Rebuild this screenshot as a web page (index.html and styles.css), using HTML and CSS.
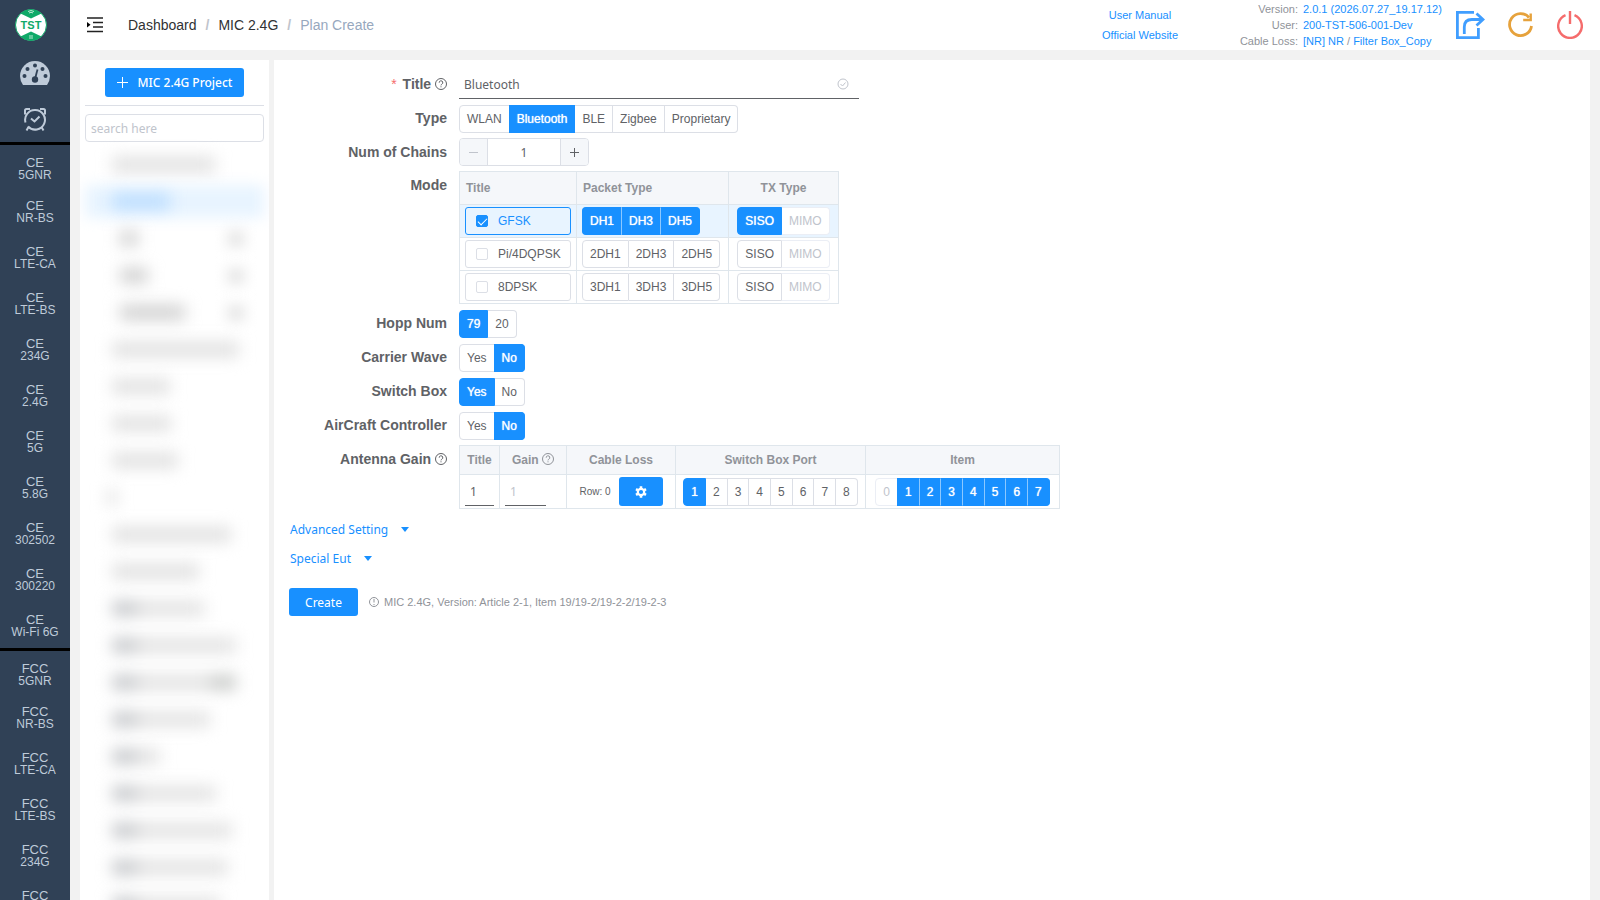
FILE: index.html
```html
<!DOCTYPE html>
<html lang="en">
<head>
<meta charset="utf-8">
<title>Plan Create</title>
<link rel="stylesheet" href="styles.css">
</head>
<body>
<svg width="0" height="0" class="defs" aria-hidden="true">
  <symbol id="help" viewBox="1 1 12 12"><circle cx="7" cy="7" r="5.500" fill="none" stroke="currentColor"/><path d="M5.200 5.700a1.800 1.800 0 1 1 2.600 1.500q-.8.4-.8 1.200M7 9.300v1" fill="none" stroke="currentColor"/></symbol>
</svg>
<div class="app">
  <nav class="rail">
    <a href="#" class="logo" aria-label="Home">
      <svg width="32" height="32" viewBox="0 0 32 32"><circle cx="16" cy="16" r="15.5" fill="#fff" stroke="#0fa968"/><path d="M5.500 4.500A15.500 15.500 0 0 1 26.500 4.500L16 9.500zM5.500 27.500A15.500 15.500 0 0 0 26.500 27.500L16 22.500z" fill="#0fa968"/><path d="M13 2.500q3-2 6 0M14 4q2-1.500 4 0M14 27h4M14 29h4" stroke="#bde8d3" fill="none"/><text x="16" y="20" text-anchor="middle" class="logo-text">TST</text></svg>
    </a>
    <a href="#" class="rail-icon" aria-label="Dashboard">
      <svg width="32" height="26" viewBox="0 0 32 26"><path d="M4 25Q1 20.500 1 16a15 15 0 0 1 30 0q0 4.500-3 9z" fill="#bfcbd9"/><g fill="#304156"><circle cx="5.500" cy="16" r="2"/><circle cx="8.500" cy="9" r="2"/><circle cx="16" cy="5.500" r="2"/><circle cx="23.500" cy="9" r="2"/><circle cx="26.500" cy="16" r="2"/><circle cx="16" cy="19.500" r="3.200"/></g><path d="M16 19l2.500-9.500" stroke="#304156" stroke-width="1.800"/></svg>
    </a>
    <a href="#" class="rail-icon" aria-label="Tasks">
      <svg width="24" height="25" viewBox="0 0 24 25" fill="none" stroke="#bfcbd9" stroke-width="2"><path d="M2.500 15.500A9.800 9.800 0 0 1 12 3a9.800 9.800 0 1 1-7 16.500"/><path d="M8 11.500l3.500 3 5-5"/><path d="M2 7.500V3.500q0-1.500 1.500-1.500h3.500M22 7.500V3.500q0-1.500-1.500-1.500h-3.500M5.500 20l-2 3.500M18.500 20l2 3.500"/></svg>
    </a>
    <div class="group">
      <a href="#">CE<small>5GNR</small></a><a href="#">CE<small>NR-BS</small></a><a href="#">CE<small>LTE-CA</small></a><a href="#">CE<small>LTE-BS</small></a><a href="#">CE<small>234G</small></a><a href="#">CE<small>2.4G</small></a><a href="#">CE<small>5G</small></a><a href="#">CE<small>5.8G</small></a><a href="#">CE<small>302502</small></a><a href="#">CE<small>300220</small></a><a href="#">CE<small>Wi-Fi 6G</small></a>
    </div>
    <div class="group">
      <a href="#">FCC<small>5GNR</small></a><a href="#">FCC<small>NR-BS</small></a><a href="#">FCC<small>LTE-CA</small></a><a href="#">FCC<small>LTE-BS</small></a><a href="#">FCC<small>234G</small></a><a href="#">FCC</a>
    </div>
  </nav>

  <div class="page">
    <header class="topbar">
      <button class="plain" aria-label="Toggle sidebar">
        <svg width="16" height="16" viewBox="0 0 16 16"><path d="M0 1h16M6 5.500h10M6 10h10M0 14.500h16" stroke="#222" stroke-width="1.500"/><path d="M0 5v5.500l3.500-2.800z" fill="#000"/></svg>
      </button>
      <nav class="crumbs" aria-label="Breadcrumb"><a href="#">Dashboard</a><b>/</b><a href="#">MIC 2.4G</a><b>/</b><span>Plan Create</span></nav>
      <div class="links"><a href="#">User Manual</a><a href="#">Official Website</a></div>
      <dl class="info">
        <dt>Version:</dt><dd><a href="#">2.0.1 (2026.07.27_19.17.12)</a></dd>
        <dt>User:</dt><dd><a href="#">200-TST-506-001-Dev</a></dd>
        <dt>Cable Loss:</dt><dd><a href="#">[NR] NR</a> / <a href="#">Filter Box_Copy</a></dd>
      </dl>
      <div class="actions">
        <button class="plain" aria-label="Share"><svg width="30" height="30" viewBox="0 0 30 30" fill="none" stroke="#409eff" stroke-width="2.800"><path d="M19 2.400H2.400v25.200H23.400V18"/><path d="M9.300 24v-7q0-7.500 7.500-7.500H27M21.500 3.500l6.500 6-6.500 6"/></svg></button>
        <button class="plain" aria-label="Refresh"><svg width="26" height="26" viewBox="0 0 26 26" fill="none" stroke="#e6a23c" stroke-width="2.800"><path d="M21 5.500A11 11 0 1 0 23.500 14"/><path d="M22.700 1.500v6.500h-7.500" stroke-width="2.400"/></svg></button>
        <button class="plain" aria-label="Log out"><svg width="26" height="28" viewBox="0 0 26 28" fill="none" stroke="#f56c6c" stroke-width="2.400"><path d="M8.500 4.200a11.800 11.800 0 1 0 9 0M13 0v13"/></svg></button>
      </div>
    </header>

    <main class="content">
      <aside class="panel projects">
        <button class="primary add"><svg width="11" height="11" viewBox="0 0 11 11"><path d="M5.500 0v11M0 5.500h11" stroke="#fff"/></svg>MIC 2.4G Project</button>
        <input class="search" type="text" placeholder="search here" aria-label="Search projects">
        <div class="tree" aria-hidden="true">
          <div class="node"><i style="width:103px"></i></div>
          <div class="node active"><i style="width:58px"></i></div>
          <div class="node child"><i style="width:18px"></i><u></u></div>
          <div class="node child"><i style="width:28px"></i><u></u></div>
          <div class="node child"><i style="width:65px"></i><u></u></div>
          <div class="node"><i style="width:127px"></i></div>
          <div class="node"><i style="width:58px"></i></div>
          <div class="node"><i style="width:59px"></i></div>
          <div class="node"><i style="width:66px"></i></div>
          <div class="node faint"><i style="width:10px"></i></div>
          <div class="node"><i style="width:119px"></i></div>
          <div class="node"><i style="width:87px"></i></div>
          <div class="node marked"><i style="width:92px"></i></div>
          <div class="node marked"><i style="width:124px"></i></div>
          <div class="node marked tail"><i style="width:124px"></i></div>
          <div class="node marked"><i style="width:98px"></i></div>
          <div class="node marked"><i style="width:48px"></i></div>
          <div class="node marked"><i style="width:104px"></i></div>
          <div class="node marked"><i style="width:120px"></i></div>
          <div class="node marked"><i style="width:116px"></i></div>
          <div class="node marked"><i style="width:108px"></i></div>
        </div>
      </aside>

      <form class="panel plan">
        <div class="row">
          <label class="name" for="title"><em>*</em> Title <svg class="q"><use href="#help"/></svg></label>
          <div class="line title"><input id="title" type="text" value="Bluetooth"><svg width="12" height="12" viewBox="0 0 12 12" fill="none" stroke="#c0c4cc"><circle cx="6" cy="6" r="5"/><path d="M3.500 6l2 2 3-3.500"/></svg></div>
        </div>
        <div class="row">
          <span class="name" id="l-type">Type</span>
          <div class="seg" role="group" aria-labelledby="l-type"><label><input type="radio" name="type">WLAN</label><label><input type="radio" name="type" checked>Bluetooth</label><label><input type="radio" name="type">BLE</label><label><input type="radio" name="type">Zigbee</label><label><input type="radio" name="type">Proprietary</label></div>
        </div>
        <div class="row">
          <label class="name" for="chains">Num of Chains</label>
          <div class="stepper"><button type="button" disabled aria-label="Decrease"><svg width="9" height="9"><path d="M0 4.500h9" stroke="currentColor"/></svg></button><input id="chains" type="text" value="1"><button type="button" aria-label="Increase"><svg width="9" height="9"><path d="M0 4.500h9M4.500 0v9" stroke="currentColor"/></svg></button></div>
        </div>
        <div class="row">
          <span class="name">Mode</span>
          <table class="grid mode">
            <thead><tr><th>Title</th><th>Packet Type</th><th class="mid">TX Type</th></tr></thead>
            <tbody>
              <tr class="on"><td><label class="check"><input type="checkbox" checked>GFSK</label></td>
                <td><div class="seg"><label><input type="checkbox" checked>DH1</label><label><input type="checkbox" checked>DH3</label><label><input type="checkbox" checked>DH5</label></div></td>
                <td class="mid"><div class="seg"><label><input type="radio" name="tx1" checked>SISO</label><label><input type="radio" name="tx1" disabled>MIMO</label></div></td></tr>
              <tr><td><label class="check"><input type="checkbox">Pi/4DQPSK</label></td>
                <td><div class="seg"><label><input type="checkbox">2DH1</label><label><input type="checkbox">2DH3</label><label><input type="checkbox">2DH5</label></div></td>
                <td class="mid"><div class="seg"><label><input type="radio" name="tx2">SISO</label><label><input type="radio" name="tx2" disabled>MIMO</label></div></td></tr>
              <tr><td><label class="check"><input type="checkbox">8DPSK</label></td>
                <td><div class="seg"><label><input type="checkbox">3DH1</label><label><input type="checkbox">3DH3</label><label><input type="checkbox">3DH5</label></div></td>
                <td class="mid"><div class="seg"><label><input type="radio" name="tx3">SISO</label><label><input type="radio" name="tx3" disabled>MIMO</label></div></td></tr>
            </tbody>
          </table>
        </div>
        <div class="row">
          <span class="name" id="l-hopp">Hopp Num</span>
          <div class="seg" role="group" aria-labelledby="l-hopp"><label><input type="radio" name="hopp" checked>79</label><label><input type="radio" name="hopp">20</label></div>
        </div>
        <div class="row">
          <span class="name" id="l-cw">Carrier Wave</span>
          <div class="seg" role="group" aria-labelledby="l-cw"><label><input type="radio" name="cw">Yes</label><label><input type="radio" name="cw" checked>No</label></div>
        </div>
        <div class="row">
          <span class="name" id="l-sb">Switch Box</span>
          <div class="seg" role="group" aria-labelledby="l-sb"><label><input type="radio" name="sb" checked>Yes</label><label><input type="radio" name="sb">No</label></div>
        </div>
        <div class="row">
          <span class="name" id="l-ac">AirCraft Controller</span>
          <div class="seg" role="group" aria-labelledby="l-ac"><label><input type="radio" name="ac">Yes</label><label><input type="radio" name="ac" checked>No</label></div>
        </div>
        <div class="row">
          <span class="name">Antenna Gain <svg class="q"><use href="#help"/></svg></span>
          <table class="grid gain">
            <thead><tr><th>Title</th><th>Gain <svg class="q"><use href="#help"/></svg></th><th>Cable Loss</th><th>Switch Box Port</th><th>Item</th></tr></thead>
            <tbody><tr>
              <td><div class="line"><input type="text" value="1" aria-label="Antenna title"></div></td>
              <td><div class="line short"><input type="text" placeholder="1" aria-label="Antenna gain"></div></td>
              <td><div class="loss">Row: 0<button type="button" class="primary" aria-label="Cable loss settings"><svg width="12" height="12" viewBox="0 0 12 12"><circle cx="6" cy="6" r="3.200" fill="none" stroke="#fff" stroke-width="2.200"/><path d="M6 .2v2M6 9.800v2M1 3.100l1.700 1M9.300 7.900l1.700 1M1 8.900l1.700-1M9.300 4.100l1.700-1" stroke="#fff" stroke-width="2.600"/></svg></button></div></td>
              <td><div class="seg"><label><input type="radio" name="port" checked>1</label><label><input type="radio" name="port">2</label><label><input type="radio" name="port">3</label><label><input type="radio" name="port">4</label><label><input type="radio" name="port">5</label><label><input type="radio" name="port">6</label><label><input type="radio" name="port">7</label><label><input type="radio" name="port">8</label></div></td>
              <td><div class="seg"><label><input type="checkbox" disabled>0</label><label><input type="checkbox" checked>1</label><label><input type="checkbox" checked>2</label><label><input type="checkbox" checked>3</label><label><input type="checkbox" checked>4</label><label><input type="checkbox" checked>5</label><label><input type="checkbox" checked>6</label><label><input type="checkbox" checked>7</label></div></td>
            </tr></tbody>
          </table>
        </div>
        <div class="more">
          <button type="button" class="fold">Advanced Setting<svg width="8" height="5"><path d="M0 0h8l-4 5z" fill="currentColor"/></svg></button>
          <button type="button" class="fold">Special Eut<svg width="8" height="5"><path d="M0 0h8l-4 5z" fill="currentColor"/></svg></button>
        </div>
        <div class="submit">
          <button type="button" class="primary">Create</button>
          <svg width="10" height="10" viewBox="0 0 10 10" fill="none" stroke="#909399"><circle cx="5" cy="5" r="4.500"/><path d="M5 2v3.500M5 7v1"/></svg>
          <span>MIC 2.4G, Version: Article 2-1, Item 19/19-2/19-2-2/19-2-3</span>
        </div>
      </form>
    </main>
  </div>
</div>
</body>
</html>
```
FILE: styles.css
```css
* { box-sizing: border-box; }
body {
  margin: 0;
  font: 14px "Liberation Sans", Arial, sans-serif;
  color: #606266;
  background: #f2f2f2;
}
a { color: inherit; text-decoration: none; }
svg { flex: none; }
button, input { font: 12px "Noto Sans", sans-serif; color: inherit; }
button { cursor: pointer; }
.defs { display: block; }
.app { display: flex; height: 100vh; overflow: hidden; }

/* Left navigation rail */
.rail {
  flex: none;
  width: 70px;
  height: 100%;
  overflow: hidden;
  background: #304156;
  color: #bfcbd9;
}
.logo { display: block; height: 50px; padding: 9px 15px; }
.logo-text { font: bold 11px "Liberation Sans", sans-serif; fill: #0fa968; }
.rail-icon { display: flex; align-items: center; justify-content: center; height: 46px; }
.group { border-top: 3px solid #000; }
.group a {
  display: flex;
  flex-direction: column;
  align-items: center;
  height: 46px;
  padding-top: 11px;
  font-size: 13px;
  line-height: 13px;
}
.group a:first-child { height: 43px; }
.group small { font-size: 12px; }

/* Header */
.page { flex: 1; min-width: 0; display: flex; flex-direction: column; }
.topbar {
  flex: none;
  display: flex;
  align-items: center;
  height: 50px;
  padding: 0 17px;
  background: #fff;
}
.plain { display: flex; padding: 0; border: 0; background: none; }
.crumbs { margin-left: 25px; color: #303133; }
.crumbs b { margin: 0 9px; color: #c0c4cc; }
.crumbs span { color: #97a8be; }
.links {
  display: grid;
  margin-left: auto;
  text-align: center;
  font-size: 11px;
  line-height: 20px;
  color: #1890ff;
}
.info {
  display: grid;
  grid-template-columns: 120px 139px;
  column-gap: 5px;
  margin: 0 13px 0 0;
  font-size: 11px;
  line-height: 16px;
  color: #909399;
  white-space: nowrap;
}
.info dt { text-align: right; }
.info dd { margin: 0; }
.info a { color: #1890ff; }
.actions { display: flex; align-items: center; gap: 23px; }

/* Panels */
.content { flex: 1; min-height: 0; display: flex; gap: 5px; padding: 10px 10px 0; }
.panel { background: #fff; }
.projects {
  flex: none;
  width: 189px;
  padding: 8px 5px 0;
  overflow: hidden;
  background: linear-gradient(#dcdfe6, #dcdfe6) 5px 45px / 179px 1px no-repeat #fff;
}
.primary {
  display: flex;
  align-items: center;
  justify-content: center;
  height: 28px;
  border: 0;
  border-radius: 3px;
  background: #1890ff;
  color: #fff;
}
.add { width: 139px; height: 29px; gap: 10px; margin: 0 auto 17px; padding: 0; font-weight: 500; }
.search {
  display: block;
  width: 100%;
  height: 28px;
  padding: 0 5px;
  border: 1px solid #dcdfe6;
  border-radius: 4px;
}
input::placeholder { color: #c0c4cc; opacity: 1; }

/* Obscured project tree */
.tree { margin-top: 4px; }
.node { display: flex; align-items: center; height: 37px; padding: 0 20px 0 27px; }
.node i { height: 15px; background: #e0e0e0; filter: blur(8px); }
.node u { width: 16px; height: 16px; margin-left: auto; background: #e2e2e2; filter: blur(7px); }
.node.child { padding-left: 35px; }
.node.child i { background: #d0d0d0; }
.node.faint { padding-left: 22px; }
.node.active { position: relative; }
.node.active::before {
  content: "";
  position: absolute;
  inset: 2px 0;
  background: #e8f4ff;
  filter: blur(7px);
}
.node.active i { position: relative; background: #b9dcff; }
.node.marked i { background: linear-gradient(90deg, #c6c8cb 20px, #e2e2e2 30px); }
.node.tail i { background: linear-gradient(90deg, #c6c8cb 20px, #e2e2e2 30px 94px, #c8cac8 104px); }

/* Form */
.plan { flex: 1; min-width: 0; padding: 10px 15px; }
.row { display: grid; grid-template-columns: 158px 1fr; column-gap: 12px; margin-bottom: 5px; }
.name { text-align: right; font-weight: bold; line-height: 28px; white-space: nowrap; }
.name em { margin-right: 2px; font-style: normal; font-weight: normal; color: #f56c6c; }
.q { width: 12px; height: 12px; vertical-align: -1px; }
.row > * { justify-self: start; }
.row > .name { justify-self: end; }
.line { display: flex; align-items: center; height: 29px; padding-right: 10px; border-bottom: 1px solid #606266; }
.line input { flex: 1; width: 100%; min-width: 0; height: 27px; padding: 0 0 0 5px; border: 0; background: none; }
.title { width: 400px; }

.seg { display: inline-flex; height: 28px; margin-top: 1px; font-size: 12px; line-height: 26px; vertical-align: top; }
.seg label { padding: 0 7px; border: 1px solid #dcdfe6; border-left-width: 0; background: #fff; cursor: pointer; }
.seg label:first-child { border-left-width: 1px; border-radius: 4px 0 0 4px; }
.seg label:last-child { border-radius: 0 4px 4px 0; }
.seg input { appearance: none; display: block; width: 0; height: 0; margin: 0; }
.seg label:has(:checked) { border-color: #1890ff; background: #1890ff; color: #fff; text-shadow: 0 0 1px #fff; }
.seg label:not(:has(:checked)) + label:has(:checked) { box-shadow: -1px 0 0 #1890ff; }
.seg label:has([type="checkbox"]:checked):not(:last-child) { border-right-color: #8cc8ff; }
.seg label:has(:disabled) { border-color: #ebeef5; color: #c0c4cc; }

.stepper { display: flex; width: 130px; height: 28px; border: 1px solid #dcdfe6; border-radius: 4px; overflow: hidden; }
.stepper button {
  display: flex;
  align-items: center;
  justify-content: center;
  width: 27px;
  padding: 0;
  border: 0;
  background: #f5f7fa;
}
.stepper button:disabled { color: #c0c4cc; }
.stepper input { flex: 1; min-width: 0; padding: 0; border: solid #dcdfe6; border-width: 0 1px; text-align: center; }

.grid { border-collapse: collapse; table-layout: fixed; font-size: 12px; }
.grid th, .grid td { border: 1px solid #dfe6ec; }
.grid th { padding: 0 6px; background: #f5f7fa; color: #909399; text-align: left; }
.grid td { height: 33px; padding: 0 5px; }
.grid .seg { margin-top: 0; }
.mode { width: 380px; }
.mode th { height: 33px; }
.mode th:nth-child(1) { width: 117px; }
.mode th:nth-child(2) { width: 152px; }
.grid .mid { text-align: center; }
.mode .on { background: #e8f4ff; }
.check {
  display: flex;
  align-items: center;
  height: 28px;
  padding-left: 10px;
  border: 1px solid #dcdfe6;
  border-radius: 3px;
}
.check input {
  appearance: none;
  width: 12px;
  height: 12px;
  margin: 0 10px 0 0;
  border: 1px solid #dcdfe6;
  border-radius: 2px;
  background: #fff;
}
.check:has(:checked) { border-color: #1890ff; color: #1890ff; }
.check input:checked { border-color: #1890ff; background: #1890ff; display: grid; justify-content: center; }
.check input:checked::after {
  content: "";
  width: 4px;
  height: 8px;
  border: solid #fff;
  border-width: 0 1px 1px 0;
  transform: rotate(45deg);
}
.gain { width: 601px; }
.gain th { height: 29px; text-align: center; }
.gain td { height: 34px; text-align: center; }
.gain th:nth-child(1) { width: 40px; }
.gain th:nth-child(2) { width: 67px; }
.gain th:nth-child(3) { width: 109px; }
.gain th:nth-child(4) { width: 190px; }
.gain .line { height: 28px; padding: 0; }
.gain .short { width: 41px; }
.loss { display: flex; align-items: center; justify-content: center; gap: 8px; font-size: 10px; }
.loss .primary { width: 44px; height: 29px; padding: 0; }

.more { display: grid; justify-items: start; padding-top: 1px; }
.fold { display: flex; align-items: center; gap: 13px; height: 29px; padding: 0 1px; border: 0; background: none; color: #1890ff; }
.submit { display: flex; align-items: center; gap: 5px; margin-top: 15px; font-size: 11px; color: #909399; }
.submit .primary { width: 69px; margin-right: 6px; }
```
